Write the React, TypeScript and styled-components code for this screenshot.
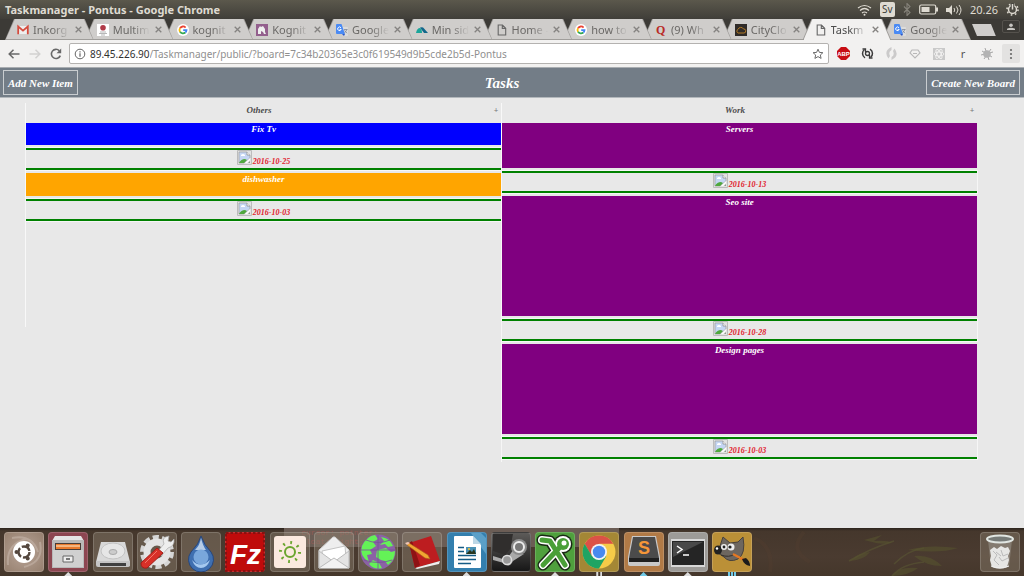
import React from "react";
import styled, { createGlobalStyle, css } from "styled-components";

const UI_FONT = `"Noto Sans", "Liberation Sans", sans-serif`;
const BOARD_FONT = `"Liberation Serif", serif`;

const GlobalStyle = createGlobalStyle`
  *, *::before, *::after { box-sizing: border-box; }
  body { margin: 0; background: #e8e8e8; }
  button, input { font: inherit; color: inherit; border: 0; padding: 0; background: none; }
  svg { display: block; flex: none; }
  h1, h2, h3, p { margin: 0; }
`;

const Desktop = styled.div`
  display: flex;
  flex-direction: column;
  min-height: 100vh;
  font-family: ${UI_FONT};
  overflow: hidden;
`;

/* ---------- system bar ---------- */

const SystemBar = styled.header`
  display: flex;
  align-items: center;
  justify-content: space-between;
  height: 19px;
  padding: 0 5px;
  background: linear-gradient(#5b584c, #403e39);
  color: #dfdbd2;
`;

const WindowTitle = styled.span`
  font-size: 11px;
  line-height: 18px;
  font-weight: 700;
  white-space: nowrap;
`;

const Tray = styled.div`
  display: flex;
  align-items: center;
  gap: 8px;
`;

const Keyboard = styled.button`
  width: 15px;
  height: 15px;
  border-radius: 2px;
  background: #dfdbd2;
  color: #3c3b37;
  font-size: 10px;
  line-height: 15px;
`;

const Clock = styled.time`
  font-size: 11px;
  line-height: 18px;
`;

/* ---------- tab strip ---------- */

const TabStrip = styled.div`
  display: flex;
  height: 21px;
  padding-left: 5px;
  background: #3c3a36;
`;

const TabList = styled.div`
  display: flex;
  flex: 1;
  min-width: 0;
`;

const TabShape = styled.div<{ $active?: boolean; $order: number }>`
  position: relative;
  z-index: ${(p) => (p.$active ? 30 : p.$order)};
  flex: 1 1 0;
  min-width: 0;
  height: 21px;
  margin-right: -9px;
  padding: 0 9px 0 12px;
  display: flex;
  align-items: center;
  background: #a09e9b;
  clip-path: polygon(0 100%, 9px 0, calc(100% - 9px) 0, 100% 100%);
  color: ${(p) => (p.$active ? "#4c4c4c" : "#6a6866")};

  &::before {
    content: "";
    position: absolute;
    inset: 0 1px ${(p) => (p.$active ? "0" : "1px")};
    z-index: -1;
    background: ${(p) => (p.$active ? "#f2f1f0" : "#cfcdcb")};
    clip-path: polygon(0 100%, 9px 0, calc(100% - 9px) 0, 100% 100%);
  }
`;

const TabTitle = styled.button`
  flex: 1;
  min-width: 0;
  margin-left: 4px;
  overflow: hidden;
  text-align: left;
  font-size: 11px;
  line-height: 20px;
  white-space: nowrap;
  mask-image: linear-gradient(90deg, #000 50%, transparent 95%);
`;

const TabClose = styled.button`
  display: grid;
  place-items: center;
  width: 13px;
  height: 13px;
  color: #858381;
`;

const StripActions = styled.div`
  display: flex;
  align-items: flex-start;
  gap: 6px;
  width: 62px;
  padding: 1px 4px 0 10px;
`;

const NewTab = styled.button`
  width: 25px;
  height: 12px;
  margin-top: 4px;
  background: #cfcdcb;
  clip-path: polygon(0 0, 19px 0, 100% 100%, 5px 100%);
`;

const Profile = styled.button`
  display: grid;
  place-items: center;
  width: 19px;
  height: 13px;
  border: 1px solid #55524d;
  border-radius: 2px;
  color: #c8c6c2;
`;

/* ---------- address toolbar ---------- */

const Toolbar = styled.div`
  display: flex;
  align-items: center;
  height: 27px;
  padding: 0 1px 0 3px;
  background: #f2f1f0;
`;

const NavButton = styled.button<{ $muted?: boolean }>`
  display: grid;
  place-items: center;
  width: 21px;
  height: 21px;
  color: ${(p) => (p.$muted ? "#d2d1d0" : "#686868")};
`;

const AddressBox = styled.label`
  display: flex;
  align-items: center;
  flex: 1;
  min-width: 0;
  height: 21px;
  margin: 0 2px 0 3px;
  padding: 0 4px;
  border: 1px solid #b4b2b0;
  border-radius: 2px;
  background: #fff;
  color: #303030;
  font-size: 10px;
`;

const Host = styled.span`
  margin-left: 4px;
`;

const AddressInput = styled.input`
  flex: 1;
  min-width: 0;
  color: #8f8f8f;
  outline: none;
`;

const Star = styled.button`
  display: grid;
  place-items: center;
  color: #6a6a6a;
`;

const Extension = styled.button<{ $boxed?: boolean }>`
  display: grid;
  place-items: center;
  width: 24px;
  height: 19px;
  color: #555;
  font-size: 11px;
  line-height: 18px;
  ${(p) =>
    p.$boxed &&
    css`
      width: 18px;
      margin: 0 3px;
      background: #e3e2e1;
      border-radius: 2px;
    `}
`;

/* ---------- task page ---------- */

const PageHeader = styled.header`
  display: flex;
  align-items: center;
  justify-content: space-between;
  height: 31px;
  padding: 0 4px 0 3px;
  border-top: 1px solid #a9adb1;
  border-bottom: 1px solid #b3b8bc;
  background: #737d87;
  color: #fff;
  font-family: ${BOARD_FONT};
  font-weight: 700;
  font-style: italic;
`;

const PageTitle = styled.h1`
  font-size: 15px;
  line-height: 20px;
`;

const HeaderButton = styled.button`
  height: 25px;
  padding: 0 4px;
  border: 1px solid #c9cdd0;
  font-size: 11px;
  line-height: 20px;
  white-space: nowrap;
`;

const Board = styled.main`
  display: flex;
  flex: 1;
  align-items: flex-start;
  padding: 5px 47px 40px 25px;
  background: #e8e8e8;
  font-family: ${BOARD_FONT};
  font-weight: 700;
  font-style: italic;
  text-align: center;
`;

const Column = styled.section`
  flex: 1;
  min-width: 0;
  min-height: 224px;
  border-left: 1px solid #f8f8f8;
`;

const ColumnHead = styled.div`
  display: flex;
  height: 20px;
  padding-right: 1px;
  color: #4d4d4d;
`;

const ColumnTitle = styled.h2`
  flex: 1;
  font-size: 9px;
  line-height: 14px;
`;

const AddTask = styled.button`
  width: 8px;
  height: 16px;
  color: #777;
  font-size: 8px;
  line-height: 16px;
  font-style: normal;
`;

const Card = styled.article<{ $color: string; $height: number }>`
  height: ${(p) => p.$height}px;
  background: ${(p) => p.$color};
  color: #fff;
`;

const CardTitle = styled.h3`
  font-size: 9px;
  line-height: 12px;
`;

const DateRow = styled.div`
  display: flex;
  align-items: flex-start;
  justify-content: center;
  gap: 1px;
  height: 22px;
  margin: 3px 0;
  border-top: 2px solid #008000;
  border-bottom: 2px solid #008000;
  outline: 1px solid #f6f6f6;
  color: #e01b2c;
  font-size: 8px;
  line-height: 24px;
`;

/* ---------- dock ---------- */

const DockBar = styled.footer`
  position: relative;
  display: flex;
  justify-content: space-between;
  height: 48px;
  padding: 4px 4px 0;
  background: linear-gradient(#2c241d 0, #45372c 3px, #4a3b30 60%, #45372b);
`;

const Backdrop = styled.div`
  position: absolute;
  inset: 0;
  overflow: hidden;
  svg { margin-left: auto; }
`;

const Ghost = styled.div`
  position: absolute;
  left: 284px;
  top: 0;
  width: 335px;
  height: 19px;
  padding-left: 17px;
  overflow: hidden;
  background: #6b5d55;
  color: #925b54;
  font: 8px/9px "Liberation Mono", monospace;
`;

const Launchers = styled.nav`
  position: relative;
  display: flex;
  flex: 0 1 748px;
  justify-content: space-between;
`;

const markShapes = {
  arrow: css`
    left: 15px;
    width: 8px;
    clip-path: polygon(50% 0, 100% 100%, 0 100%);
  `,
  pair: css`
    left: 16px;
    width: 6px;
    clip-path: polygon(0 0, 2px 0, 2px 100%, 4px 100%, 4px 0, 100% 0, 100% 100%, 0 100%);
  `,
  triple: css`
    left: 15px;
    width: 8px;
    mask-image: repeating-linear-gradient(90deg, #000 0 2px, transparent 2px 3px);
  `,
};

const Launcher = styled.button<{
  $tone: string;
  $mark?: string;
  $shape?: keyof typeof markShapes;
}>`
  position: relative;
  width: 40px;
  height: 40px;
  border: 1px solid rgba(255, 255, 255, 0.16);
  border-radius: 4px;
  background: ${(p) => p.$tone};
  svg { margin: -1px; }

  ${(p) =>
    p.$mark &&
    css`
      &::after {
        content: "";
        position: absolute;
        bottom: -5px;
        height: 4px;
        background: ${p.$mark};
        ${markShapes[p.$shape ?? "arrow"]}
      }
    `}
`;

/* ---------- small icons ---------- */

const CloseGlyph = () => (
  <svg width="7" height="7" viewBox="0 0 7 7" stroke="currentColor" strokeWidth="1.3">
    <path d="M.7.7l5.6 5.6M6.3.7L.7 6.3" />
  </svg>
);

const GoogleG = () => (
  <svg width="12" height="12" viewBox="0 0 12 12" fill="none" strokeWidth="1.8">
    <circle cx="6" cy="6" r="6" fill="#fff" />
    <path d="M8.6 3.6A3.5 3.5 0 0 0 3 4.2" stroke="#ea4335" />
    <path d="M3 4.2a3.6 3.6 0 0 0 0 3.6" stroke="#fbbc05" />
    <path d="M3 7.8a3.5 3.5 0 0 0 5.3.7" stroke="#34a853" />
    <path d="M8.3 8.5a3.3 3.3 0 0 0 1.2-2.3H6.2" stroke="#4285f4" />
  </svg>
);

const Translate = () => (
  <svg width="12" height="12" viewBox="0 0 12 12" fill="none">
    <path d="M5 3h6q1 0 1 1v7q0 1-1 1H8z" fill="#dcdcdc" />
    <path d="M1 0h4.5L9 10H1Q0 10 0 9V1q0-1 1-1z" fill="#4a8af4" />
    <path d="M6 10h3l-1 2z" fill="#2a56c6" />
    <path d="M5 3.8a1.8 1.8 0 1 0 .2 1.6H3.6" stroke="#fff" />
    <path d="M8 5.5h3.5M10.8 5.5Q10 8 8.5 8.7M8.5 6.5l2.5 2.7" stroke="#7d8797" strokeWidth=".8" />
  </svg>
);

const DocIcon = () => (
  <svg width="12" height="12" viewBox="0 0 12 12" fill="none" stroke="#666" strokeWidth="1.1">
    <path d="M2.2 1h4.3l3.2 3.2V11H2.2zM6.3 1v3.4h3.4" />
  </svg>
);

const favicons: Record<string, React.ReactNode> = {
  gmail: (
    <svg width="12" height="12" viewBox="0 0 12 12" fill="none">
      <path d="M1 2h10v8H1z" fill="#eee" />
      <path d="M1.2 10.3V2.5L6 6.6l4.8-4.1v7.8" stroke="#d54b3d" strokeWidth="1.8" />
    </svg>
  ),
  school: (
    <svg width="12" height="12" viewBox="0 0 12 12">
      <path d="M0 0h12v12H0z" fill="#fff" />
      <circle cx="6" cy="3.8" r="2.8" fill="#b03a48" />
      <path d="M3 8h6M2 9.5h8M4 11h4" stroke="#999" strokeWidth=".7" />
    </svg>
  ),
  google: <GoogleG />,
  horse: (
    <svg width="12" height="12" viewBox="0 0 12 12">
      <path d="M0 0h12v12H0z" fill="#935f8d" />
      <path d="M2 10V5l2-3 1 1 2-1 2 3v3l1 2H8L7 8 5 7v3z" fill="#eee" />
    </svg>
  ),
  translate: <Translate />,
  hills: (
    <svg width="12" height="12" viewBox="0 0 12 12">
      <path d="M0 9q1-5 4-5 2 1 2 5z" fill="#1aa59a" />
      <path d="M4 3.5q3-1 4 1l4 4.5H8z" fill="#12678b" />
    </svg>
  ),
  doc: <DocIcon />,
  quora: (
    <svg width="12" height="12" viewBox="0 0 12 12">
      <text x="1" y="10" fontFamily="Liberation Serif" fontWeight="700" fontSize="12" fill="#b92b27">Q</text>
    </svg>
  ),
  cloud: (
    <svg width="12" height="12" viewBox="0 0 12 12" fill="none">
      <path d="M0 0h12v12H0z" fill="#2f2b28" />
      <path d="M3 9a2 2 0 0 1 0-3.6A3 3 0 0 1 8.5 5a2 2 0 0 1 .5 4z" stroke="#b37a25" />
    </svg>
  ),
};

const tabs = [
  { icon: "gmail", title: "Inkorg" },
  { icon: "school", title: "Multim" },
  { icon: "google", title: "kognit" },
  { icon: "horse", title: "Kognit" },
  { icon: "translate", title: "Google" },
  { icon: "hills", title: "Min sid" },
  { icon: "doc", title: "Home -" },
  { icon: "google", title: "how to" },
  { icon: "quora", title: "(9) Wh" },
  { icon: "cloud", title: "CityClo" },
  { icon: "doc", title: "Taskm", active: true },
  { icon: "translate", title: "Google" },
];

const extensions: { name: string; glyph: React.ReactNode; boxed?: boolean }[] = [
  {
    name: "Adblock Plus",
    glyph: (
      <svg width="13" height="13" viewBox="0 0 13 13">
        <path d="M4 0h5l4 4v5l-4 4H4L0 9V4z" fill="#c70d12" />
        <text x="6.5" y="8.8" textAnchor="middle" fontFamily="Liberation Sans" fontWeight="700" fontSize="6" fill="#fff">ABP</text>
      </svg>
    ),
  },
  {
    name: "Session sync",
    glyph: (
      <svg width="13" height="13" viewBox="0 0 13 13" fill="none" stroke="#3c3c3c" strokeWidth="1.5">
        <path d="M4 10.800A5 5 0 0 1 3.500 2.500M9 2.200a5 5 0 0 1 .5 8.300" />
        <path d="M1.500 2h3v3M11.500 11h-3V8" strokeWidth="1.300" />
        <circle cx="6.500" cy="6.500" r="2" strokeWidth="1.300" />
      </svg>
    ),
  },
  {
    name: "Refresh",
    glyph: (
      <svg width="13" height="13" viewBox="0 0 13 13" fill="#cbcaca">
        <path d="M6.500 0v3Q3 5 5 9l-1.500 2.500Q-2 4 6.500 0zM6.500 13v-3Q10 8 8 4l1.500-2.500Q15 9 6.500 13z" />
      </svg>
    ),
  },
  {
    name: "Pocket",
    glyph: (
      <svg width="12" height="10" viewBox="0 0 12 10" fill="none" stroke="#b8b8b8" strokeWidth="1.100">
        <path d="M3 1h6l2 3-5 5-5-5zM4 4.500h4" />
      </svg>
    ),
  },
  {
    name: "React tools",
    glyph: (
      <svg width="12" height="12" viewBox="0 0 12 12" fill="none" stroke="#f2f1f0" strokeWidth=".9">
        <path d="M0 0h12v12H0z" fill="#c9c9c9" stroke="none" />
        <ellipse cx="6" cy="6" rx="5" ry="2" />
        <ellipse cx="6" cy="6" rx="5" ry="2" transform="rotate(60 6 6)" />
        <ellipse cx="6" cy="6" rx="5" ry="2" transform="rotate(120 6 6)" />
      </svg>
    ),
  },
  { name: "Reader", glyph: "r" },
  {
    name: "Debugger",
    glyph: (
      <svg width="12" height="12" viewBox="0 0 12 12" fill="none" stroke="#929292">
        <path d="M1 3l10 6M4 0l4 12M10 1L3 11M0 7l12-3" strokeWidth=".8" />
        <circle cx="6" cy="6" r="3.800" fill="#b3b3b3" stroke="none" />
      </svg>
    ),
  },
  {
    name: "Menu",
    boxed: true,
    glyph: (
      <svg width="4" height="12" viewBox="0 0 4 12" fill="#686868">
        <circle cx="2" cy="2" r="1.100" />
        <circle cx="2" cy="6" r="1.100" />
        <circle cx="2" cy="10" r="1.100" />
      </svg>
    ),
  },
];

const BrokenImage = () => (
  <svg width="15" height="15" viewBox="0 0 15 15" role="img" aria-label="Calendar">
    <path d="M.5.5h14v14H.5z" fill="#e2e2e2" stroke="#bcbcbc" />
    <path d="M2 2h8l3 3v3l-6 5H2z" fill="#c5d6f3" stroke="#9b9b9b" strokeWidth=".7" />
    <path d="M10 2v3h3" fill="#fff" stroke="#8f8f8f" strokeWidth=".8" />
    <path d="M4 5q2-2 4 0v1H4z" fill="#fff" />
    <path d="M2 13q2-4 6-4l2 1-3 3z" fill="#4fa83d" />
    <path d="M8 13l5-5v2l-3 3z" fill="#fff" />
    <path d="M11 13l2-2v2z" fill="#8e9b8c" />
  </svg>
);

/* ---------- board data ---------- */

const columns = [
  {
    title: "Others",
    tasks: [
      { title: "Fix Tv", color: "#0000ff", height: 22, date: "2016-10-25" },
      { title: "dishwasher", color: "#ffa500", height: 23, date: "2016-10-03" },
    ],
  },
  {
    title: "Work",
    tasks: [
      { title: "Servers", color: "#800080", height: 45, date: "2016-10-13" },
      { title: "Seo site", color: "#800080", height: 120, date: "2016-10-28" },
      { title: "Design pages", color: "#800080", height: 90, date: "2016-10-03" },
    ],
  },
];

/* ---------- dock icons, each on a 40 unit grid ---------- */

const DockSvg = ({ children }: { children: React.ReactNode }) => (
  <svg width="40" height="40" viewBox="0 0 40 40" fill="none">
    {children}
  </svg>
);

const PLAIN = "rgba(146, 133, 117, .42)";

const launchers: {
  name: string;
  tone: string;
  mark?: string;
  shape?: keyof typeof markShapes;
  art: React.ReactNode;
}[] = [
  {
    name: "Search",
    tone: "radial-gradient(circle, #b9a598, #96806f)",
    art: (
      <>
        <path d="M4 33Q2 12 22 7M36 10q4 20-16 25M8 6q20-4 26 14" stroke="#c4b4a8" strokeWidth="2" opacity=".6" />
        <circle cx="20" cy="20" r="11" fill="#fff" />
        <circle cx="20" cy="20" r="5.500" stroke="#54473e" strokeWidth="2.400" strokeDasharray="9.500 2" />
        <circle cx="12.500" cy="20" r="2" fill="#54473e" />
        <circle cx="23.700" cy="13.500" r="2" fill="#54473e" />
        <circle cx="23.700" cy="26.500" r="2" fill="#54473e" />
      </>
    ),
  },
  {
    name: "Files",
    tone: "#8d4651",
    mark: "#ddd",
    art: (
      <>
        <path d="M7 4h26l3 5H4z" fill="#e5e5e5" />
        <path d="M4 8h32v28H4z" fill="#b9b9b9" />
        <path d="M7 11h26v7H7z" fill="#493c36" />
        <path d="M8 12h24v5H8z" fill="#e97a2d" />
        <path d="M8 14h24" stroke="#fff1d6" />
        <path d="M5 18h30v17H5z" fill="#d0d0d0" />
        <path d="M15 24h10v6H15z" fill="#eee" stroke="#666" />
        <path d="M18 26h4v2h-4z" fill="#777" />
      </>
    ),
  },
  {
    name: "Disk",
    tone: PLAIN,
    art: (
      <>
        <path d="M8 10h24l5 20H3z" fill="#d8d8d8" />
        <ellipse cx="20" cy="19" rx="12" ry="8" fill="#e6e6e6" stroke="#c2c2c2" />
        <ellipse cx="20" cy="20" rx="4" ry="2.500" fill="#ccc" stroke="#aaa" />
        <path d="M3 29h34v5q-1 1-2 1H5q-2 0-2-2z" fill="#c5c5c5" />
        <path d="M7 31h26v3H7z" fill="#404040" />
      </>
    ),
  },
  {
    name: "Settings",
    tone: PLAIN,
    art: (
      <>
        <circle cx="20" cy="20" r="14.500" stroke="#d6d6d6" strokeWidth="5" strokeDasharray="6 3.100" />
        <circle cx="20" cy="20" r="10" stroke="#e4e4e4" strokeWidth="7" />
        <path d="M20 20l7-8q-3-7 5-8l-1 5 3 1 3-3q1 7-6 9l-7 8z" fill="#eee" stroke="#aaa" strokeWidth=".7" />
        <path d="M20 16l6 5L10 36q-6 1-6-5z" fill="#d73028" stroke="#a51d18" />
        <path d="M20 19L8 31" stroke="#f3756a" />
      </>
    ),
  },
  {
    name: "Deluge",
    tone: PLAIN,
    art: (
      <>
        <path d="M20 4q3 9 10 16a12.500 12.500 0 1 1-20 0Q18 12 20 4z" fill="#3f6fb0" stroke="#28467a" />
        <path d="M20 6q2 8 5 12H14q5-5 6-12z" fill="#b6cce6" />
        <circle cx="20" cy="25" r="7.500" fill="#79a7dc" />
        <path d="M11 28q8 9 18 0-3 8-9 8t-9-8z" fill="#a5c9f0" />
      </>
    ),
  },
  {
    name: "FileZilla",
    tone: "#b60c0c",
    art: (
      <>
        <path d="M1 1h38v38H1z" fill="#bf0b0b" stroke="#811" strokeWidth="2" strokeDasharray="2.500 2" />
        <text x="5" y="32" fontFamily="Liberation Sans" fontWeight="700" fontStyle="italic" fontSize="28" fill="#fff">Fz</text>
      </>
    ),
  },
  {
    name: "Brightness",
    tone: PLAIN,
    art: (
      <>
        <rect x="4" y="4" width="32" height="32" rx="3" fill="#fbe9df" />
        <circle cx="20" cy="20" r="5" stroke="#6aa52e" strokeWidth="2" />
        <circle cx="20" cy="20" r="9.500" stroke="#6aa52e" strokeWidth="3" strokeDasharray="1.800 5.660" />
      </>
    ),
  },
  {
    name: "Mail",
    tone: PLAIN,
    art: (
      <>
        <path d="M5 18L19 5h2l14 13v18H5z" fill="#eee" stroke="#ccc" />
        <path d="M8 19l23-5 1 12-12 5-11-5z" fill="#fff" stroke="#c4c4c4" />
        <path d="M5 19l15 11 15-11v17H5z" fill="#e4e4e4" stroke="#bbb" />
        <path d="M5 36l15-10 15 10" fill="#f2f2f2" stroke="#bbb" />
      </>
    ),
  },
  {
    name: "Globe",
    tone: PLAIN,
    art: (
      <>
        <circle cx="20" cy="20" r="17.500" fill="#8b62a5" />
        <path d="M4 14q5-10 13-11l3 4-5 3 3 4-6 4 2 4-5 1 2 7Q1 24 4 14zM23 5q9 1 12 9l-5 1-3-3-5 1 4-4zM19 18l9-2 5 4 4-1q0 9-7 14l-3-4-4-1-5-3zM15 28l6 3 3 5q-8 2-13-4z" fill="#64f257" />
        <path d="M8 8q12 5 24 0M3 18h34M6 28q14 5 28 0M20 3v34" stroke="#76519a" strokeWidth=".8" />
      </>
    ),
  },
  {
    name: "Dictionary",
    tone: PLAIN,
    art: (
      <>
        <path d="M7 11l22-7 9 25-25 7z" fill="#bd1d20" />
        <path d="M13 36l25-7-1 3-22 5z" fill="#eee" />
        <path d="M7 11l3-2 8 24-5 3z" fill="#8e1214" />
        <path d="M5 13l2-2 19 12 2 4-5-1z" fill="#f1a532" stroke="#a3621c" strokeWidth=".6" />
        <path d="M5 13l-2-2 3-1 2 1z" fill="#f2c8b4" />
      </>
    ),
  },
  {
    name: "Writer",
    tone: "#337fae",
    mark: "#ddd",
    art: (
      <>
        <path d="M24 1h10l5 5v16z" fill="#5ba0c8" />
        <path d="M8 4h18l8 9v22q0 1-1 1H8q-1 0-1-1V5q0-1 1-1z" fill="#fff" />
        <path d="M26 4v8h8z" fill="#bcd7e6" />
        <path d="M11 15.500h6M11 19.500h6M11 23.500h18M11 27.500h18M11 31.500h13" stroke="#145b85" strokeWidth="1.700" />
        <path d="M19 15h10v7H19z" fill="#4b91b4" />
        <path d="M19 22l4-4 2 2 2-3 2 5z" fill="#29371f" />
        <circle cx="22" cy="17" r="1" fill="#ffc928" />
      </>
    ),
  },
  {
    name: "Steam",
    tone: "linear-gradient(#5d5b59, #171717)",
    art: (
      <>
        <path d="M2 2h20q-2 8-1 13l-7 8-12-4z" fill="#302e2d" />
        <path d="M2 24l13 4 8-11q4 6 10 5l-11 7q-4 8-9 2L2 28z" fill="#aaa" />
        <circle cx="28" cy="15" r="8" fill="#8b8b8b" />
        <circle cx="28" cy="15" r="5" fill="#777" stroke="#ececec" strokeWidth="2" />
        <circle cx="16" cy="28" r="4.500" fill="#999" stroke="#ddd" strokeWidth="1.500" />
      </>
    ),
  },
  {
    name: "Xmind",
    tone: "#4fa03d",
    mark: "#ddd",
    art: (
      <>
        <g strokeLinejoin="round">
          <path d="M7 8l8 1 15 24M8 33l18-19" stroke="#1a2a15" strokeWidth="11" strokeLinecap="round" />
          <circle cx="28" cy="12" r="9.500" fill="#1a2a15" />
          <path d="M7 8l8 1 15 24M8 33l18-19" stroke="#fff" strokeWidth="8" strokeLinecap="round" />
          <circle cx="28" cy="12" r="8" fill="#fff" />
          <path d="M7 8l8 1 15 24M8 33l18-19" stroke="#4a9f38" strokeWidth="5" strokeLinecap="round" />
        </g>
        <circle cx="28" cy="12" r="6" fill="#4a9f38" />
        <circle cx="29" cy="11" r="2.500" fill="#fff" />
      </>
    ),
  },
  {
    name: "Chrome",
    tone: "#a48735",
    mark: "#ddd",
    shape: "pair",
    art: (
      <>
        <circle cx="20" cy="20" r="16.500" fill="#f5cb48" />
        <path d="M5.700 11.800A16.500 16.500 0 0 1 34.300 11.800H20l-7.500 12z" fill="#db5247" />
        <path d="M5.700 11.800A16.500 16.500 0 0 0 20 36.500l7.200-12.300H13z" fill="#1fa463" />
        <circle cx="20" cy="20" r="8" fill="#f3f3f3" />
        <circle cx="20" cy="20" r="6.200" fill="#4889ef" />
      </>
    ),
  },
  {
    name: "Sublime Text",
    tone: "#b17a46",
    mark: "#72cbe8",
    art: (
      <>
        <path d="M8 4h24l4 21v7q0 2-2 2H6q-2 0-2-2v-7z" fill="#c9c9c9" />
        <path d="M9 5h22l4 21H5z" fill="#4b4b4b" />
        <path d="M5 26h30v4H5z" fill="#202020" />
        <text x="20" y="22" textAnchor="middle" fontFamily="Liberation Sans" fontWeight="700" fontSize="18" fill="#f59638">S</text>
      </>
    ),
  },
  {
    name: "Terminal",
    tone: "#9d9b98",
    mark: "#ddd",
    art: (
      <>
        <path d="M3 7h34v28H3z" fill="#d8d8d8" />
        <path d="M4 9h32v24H4z" fill="#252525" />
        <path d="M5 10h30L5 25z" fill="#494949" />
        <path d="M9 14l5 3.500L9 21M15 23h6" stroke="#fff" strokeWidth="1.500" />
      </>
    ),
  },
  {
    name: "GIMP",
    tone: "#bb9037",
    mark: "#72cbe8",
    shape: "triple",
    art: (
      <>
        <path d="M7 17l4-12 7 6 8-1 5-5q3 17-5 22-9 4-14-2l-6-4z" fill="#6d665f" stroke="#48423c" />
        <ellipse cx="6" cy="18" rx="4" ry="4.500" fill="#222" />
        <circle cx="5" cy="16.500" r="1.200" fill="#fff" />
        <circle cx="12" cy="15" r="3" fill="#eee" />
        <circle cx="19" cy="15" r="3.500" fill="#eee" />
        <circle cx="12" cy="15" r="1.400" fill="#222" />
        <circle cx="18" cy="15" r="1.600" fill="#222" />
        <path d="M9 23q8 3 14-1" stroke="#35302b" />
        <path d="M21 22l11 6" stroke="#e57822" strokeWidth="2.500" />
        <path d="M30 27l4-1q4 3 4 8-6-1-8-7z" fill="#1c1c1c" />
      </>
    ),
  },
];

const trashArt = (
  <>
    <path d="M8 8l3 27q9 3 18 0l3-27z" fill="#a9a49d" opacity=".45" />
    <path d="M10 18l4-3 3 2 4-3 4 2 3-1 2 4-2 5 1 4-2 7q-7 3-15 0l-2-7 1-4z" fill="#e6e6e4" />
    <path d="M13 19l4 4-3 5 5 5M21 18l2 6 5-2M28 26l-6 3-3-4M16 20l5 4" stroke="#bbb" />
    <ellipse cx="20" cy="7" rx="13" ry="3.500" fill="#777b78" stroke="#e1e6e2" strokeWidth="2" />
    <path d="M11 34q9 4 18 0" stroke="#eee" />
  </>
);

/* ---------- page pieces ---------- */

const StatusTray = () => (
  <Tray>
    <svg width="15" height="12" viewBox="0 0 15 12" fill="none" stroke="currentColor" strokeWidth="1.200">
      <path d="M1 4q6.500-5 13 0M3 6.500q4.500-4 9 0M5 9q2.500-2 5 0" />
      <circle cx="7.500" cy="10.700" r="1" fill="currentColor" stroke="none" />
    </svg>
    <Keyboard>Sv</Keyboard>
    <svg width="8" height="13" viewBox="0 0 8 13" fill="none" stroke="#85827a" strokeWidth="1.100">
      <path d="M1 3.500l6 6-3 3V.5l3 3-6 6" />
    </svg>
    <svg width="19" height="11" viewBox="0 0 19 11" fill="none">
      <rect x=".7" y="1" width="16" height="9" rx="1.500" stroke="currentColor" strokeWidth="1.200" />
      <path d="M2.500 3h8v5h-8zM17 3.500h2v4h-2z" fill="currentColor" />
    </svg>
    <svg width="16" height="12" viewBox="0 0 16 12" fill="none" stroke="currentColor">
      <path d="M0 4h3l3-3v10L3 8H0z" fill="currentColor" stroke="none" />
      <path d="M8 4q1.500 2 0 4M10.500 2.500q3 3.500 0 7M13 1q4 5 0 10" />
    </svg>
    <Clock>20.26</Clock>
    <svg width="13" height="13" viewBox="0 0 13 13" fill="none" stroke="currentColor">
      <circle cx="6.500" cy="6.500" r="4" strokeWidth="1.500" />
      <circle cx="6.500" cy="6.500" r="5.500" strokeWidth="1.600" strokeDasharray="1.600 2.720" />
      <path d="M6.500 0v6" stroke="#4a4841" strokeWidth="3.500" />
      <path d="M6.500 1v5.500" strokeWidth="1.500" />
    </svg>
  </Tray>
);

const BrowserTabs = () => (
  <TabStrip>
    <TabList>
      {tabs.map((tab, i) => (
        <TabShape key={i} $active={tab.active} $order={tabs.length - i}>
          {favicons[tab.icon]}
          <TabTitle>{tab.title}</TabTitle>
          <TabClose aria-label={`Close ${tab.title}`}>
            <CloseGlyph />
          </TabClose>
        </TabShape>
      ))}
    </TabList>
    <StripActions>
      <NewTab aria-label="New tab" />
      <Profile aria-label="Profile">
        <svg width="8" height="8" viewBox="0 0 8 8" fill="currentColor">
          <circle cx="4" cy="2.200" r="1.800" />
          <path d="M0 7V5.800Q4 3.500 8 5.800V7z" />
        </svg>
      </Profile>
    </StripActions>
  </TabStrip>
);

const AddressBar = () => (
  <Toolbar>
    <NavButton aria-label="Back">
      <svg width="12" height="10" viewBox="0 0 12 10" fill="none" stroke="currentColor" strokeWidth="1.500">
        <path d="M11.500 5H1.500M5.500.7L1.200 5l4.300 4.300" />
      </svg>
    </NavButton>
    <NavButton aria-label="Forward" $muted>
      <svg width="12" height="10" viewBox="0 0 12 10" fill="none" stroke="currentColor" strokeWidth="1.500">
        <path d="M.5 5h10M6.500.7L10.800 5 6.500 9.300" />
      </svg>
    </NavButton>
    <NavButton aria-label="Reload">
      <svg width="12" height="12" viewBox="0 0 12 12" fill="none" stroke="currentColor" strokeWidth="1.600">
        <path d="M10.300 7.600A4.600 4.600 0 1 1 9.300 2.700" />
        <path d="M11.200.5v4.700H6.500z" fill="currentColor" stroke="none" />
      </svg>
    </NavButton>
    <AddressBox>
      <svg width="12" height="12" viewBox="0 0 12 12" fill="none" stroke="#666">
        <circle cx="6" cy="6" r="4.800" />
        <path d="M6 5.200v3.500M6 3.200v1.200" strokeWidth="1.200" />
      </svg>
      <Host>89.45.226.90</Host>
      <AddressInput
        aria-label="Address"
        defaultValue="/Taskmanager/public/?board=7c34b20365e3c0f619549d9b5cde2b5d-Pontus"
      />
      <Star aria-label="Bookmark">
        <svg width="12" height="12" viewBox="0 0 12 12" fill="none" stroke="currentColor">
          <path d="M6 1.200l1.400 3.200 3.500.3-2.600 2.300.8 3.400L6 8.600l-3.100 1.800.8-3.400L1.100 4.700l3.500-.3z" />
        </svg>
      </Star>
    </AddressBox>
    {extensions.map((ext) => (
      <Extension key={ext.name} aria-label={ext.name} $boxed={ext.boxed}>
        {ext.glyph}
      </Extension>
    ))}
  </Toolbar>
);

const Dock = () => (
  <DockBar>
    <Backdrop>
      <svg width="300" height="48" viewBox="0 0 300 48" fill="none">
        <path d="M125 33q20-12 45-20M170 36q14-14 30-16M168 48q10-12 32-14" stroke="#5a5633" strokeWidth="1.500" opacity=".6" />
        <path d="M140 12l18-5-8 6q14-1 18 2-12 2-20-1zM184 22q20-6 50-2-18 6-50 2zM190 28q16-2 28 10-16 0-28-10zM126 33q8-8 20-9-6 8-20 9zM168 48q6-10 26-8-8 7-26 8z" fill="#57532f" opacity=".6" />
        <path d="M30 10q20 8 16 34M80 4q-16 18 6 30" stroke="#58402f" strokeWidth="4" opacity=".25" />
      </svg>
      <Ghost>
        cursor: pointer;
        <br />
        float: right;
      </Ghost>
    </Backdrop>
    <Launchers>
      {launchers.map((item) => (
        <Launcher
          key={item.name}
          aria-label={item.name}
          $tone={item.tone}
          $mark={item.mark}
          $shape={item.shape}
        >
          <DockSvg>{item.art}</DockSvg>
        </Launcher>
      ))}
    </Launchers>
    <Launcher aria-label="Trash" $tone={PLAIN}>
      <DockSvg>{trashArt}</DockSvg>
    </Launcher>
  </DockBar>
);

export default function App() {
  return (
    <Desktop>
      <GlobalStyle />
      <SystemBar>
        <WindowTitle>Taskmanager - Pontus - Google Chrome</WindowTitle>
        <StatusTray />
      </SystemBar>
      <BrowserTabs />
      <AddressBar />
      <PageHeader>
        <HeaderButton>Add New Item</HeaderButton>
        <PageTitle>Tasks</PageTitle>
        <HeaderButton>Create New Board</HeaderButton>
      </PageHeader>
      <Board>
        {columns.map((column) => (
          <Column key={column.title}>
            <ColumnHead>
              <ColumnTitle>{column.title}</ColumnTitle>
              <AddTask aria-label={`Add task to ${column.title}`}>+</AddTask>
            </ColumnHead>
            {column.tasks.map((task) => (
              <React.Fragment key={task.title}>
                <Card $color={task.color} $height={task.height}>
                  <CardTitle>{task.title}</CardTitle>
                </Card>
                <DateRow>
                  <BrokenImage />
                  <time dateTime={task.date}>{task.date}</time>
                </DateRow>
              </React.Fragment>
            ))}
          </Column>
        ))}
      </Board>
      <Dock />
    </Desktop>
  );
}
